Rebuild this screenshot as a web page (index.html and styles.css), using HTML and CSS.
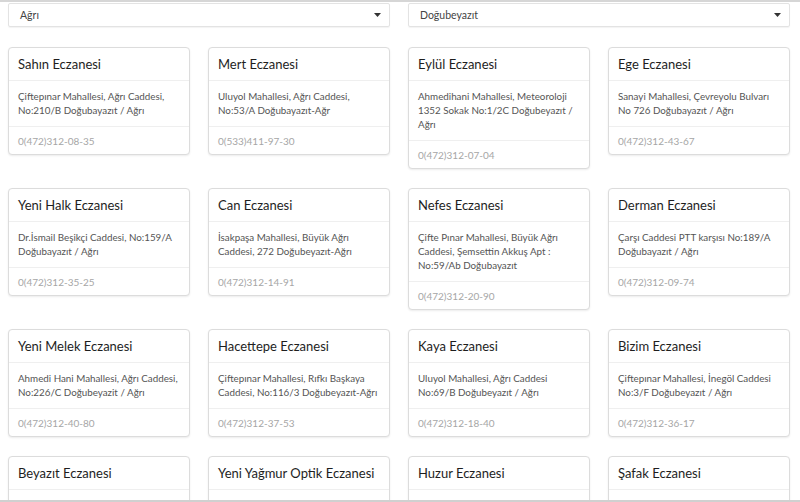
FILE: index.html
```html
<!DOCTYPE html>
<html lang="tr">
<head>
<meta charset="utf-8">
<title>Nöbetçi Eczaneler</title>
<link rel="stylesheet" href="styles.css">
</head>
<body>
<div class="topline"></div>
<div class="filters">
  <div class="select"><span>Ağrı</span><svg class="caret" width="7" height="4" viewBox="0 0 7 4"><path d="M0 0h7L3.5 4z" fill="#333"/></svg></div>
  <div class="select"><span>Doğubeyazıt</span><svg class="caret" width="7" height="4" viewBox="0 0 7 4"><path d="M0 0h7L3.5 4z" fill="#333"/></svg></div>
</div>
<div class="grid">
  <div class="card"><div class="card-title">Sahın Eczanesi</div><div class="card-body">Çiftepınar Mahallesi, Ağrı Caddesi, No:210/B Doğubayazıt / Ağrı</div><div class="card-foot">0(472)312-08-35</div></div>
  <div class="card"><div class="card-title">Mert Eczanesi</div><div class="card-body">Uluyol Mahallesi, Ağrı Caddesi, No:53/A Doğubayazıt-Ağr</div><div class="card-foot">0(533)411-97-30</div></div>
  <div class="card"><div class="card-title">Eylül Eczanesi</div><div class="card-body">Ahmedihani Mahallesi, Meteoroloji 1352 Sokak No:1/2C Doğubeyazıt / Ağrı</div><div class="card-foot">0(472)312-07-04</div></div>
  <div class="card"><div class="card-title">Ege Eczanesi</div><div class="card-body">Sanayi Mahallesi, Çevreyolu Bulvarı No 726 Doğubayazıt / Ağrı</div><div class="card-foot">0(472)312-43-67</div></div>

  <div class="card"><div class="card-title">Yeni Halk Eczanesi</div><div class="card-body">Dr.İsmail Beşikçi Caddesi, No:159/A Doğubayazıt / Ağrı</div><div class="card-foot">0(472)312-35-25</div></div>
  <div class="card"><div class="card-title">Can Eczanesi</div><div class="card-body">İsakpaşa Mahallesi, Büyük Ağrı Caddesi, 272 Doğubeyazıt-Ağrı</div><div class="card-foot">0(472)312-14-91</div></div>
  <div class="card"><div class="card-title">Nefes Eczanesi</div><div class="card-body">Çifte Pınar Mahallesi, Büyük Ağrı Caddesi, Şemsettin Akkuş Apt : No:59/Ab Doğubayazıt</div><div class="card-foot">0(472)312-20-90</div></div>
  <div class="card"><div class="card-title">Derman Eczanesi</div><div class="card-body">Çarşı Caddesi PTT karşısı No:189/A Doğubayazıt / Ağrı</div><div class="card-foot">0(472)312-09-74</div></div>

  <div class="card"><div class="card-title">Yeni Melek Eczanesi</div><div class="card-body">Ahmedi Hani Mahallesi, Ağrı Caddesi, No:226/C Doğubeyazit / Ağrı</div><div class="card-foot">0(472)312-40-80</div></div>
  <div class="card"><div class="card-title">Hacettepe Eczanesi</div><div class="card-body">Çiftepınar Mahallesi, Rıfkı Başkaya Caddesi, No:116/3 Doğubeyazıt-Ağrı</div><div class="card-foot">0(472)312-37-53</div></div>
  <div class="card"><div class="card-title">Kaya Eczanesi</div><div class="card-body">Uluyol Mahallesi, Ağrı Caddesi No:69/B Doğubeyazıt / Ağrı</div><div class="card-foot">0(472)312-18-40</div></div>
  <div class="card"><div class="card-title">Bizim Eczanesi</div><div class="card-body">Çiftepınar Mahallesi, İnegöl Caddesi No:3/F Doğubeyazıt / Ağrı</div><div class="card-foot">0(472)312-36-17</div></div>

  <div class="card"><div class="card-title">Beyazıt Eczanesi</div><div class="card-body">İshakpaşa Mahallesi, Ağrı Caddesi, No:12 Doğubayazıt / Ağrı</div><div class="card-foot">0(472)312-11-22</div></div>
  <div class="card"><div class="card-title">Yeni Yağmur Optik Eczanesi</div><div class="card-body">Dr.İsmail Beşikçi Caddesi No:107 Doğubayazıt / Ağrı</div><div class="card-foot">0(472)312-55-10</div></div>
  <div class="card"><div class="card-title">Huzur Eczanesi</div><div class="card-body">Uluyol Mahallesi, Ağrı Caddesi, Doğubayazıt / Ağrı</div><div class="card-foot">0(472)312-60-44</div></div>
  <div class="card"><div class="card-title">Şafak Eczanesi</div><div class="card-body">Uluyol Mahallesi, Ağrı Caddesi, No:15 Doğubayazıt / Ağrı</div><div class="card-foot">0(472)312-71-30</div></div>
</div>
<div class="bottomline"></div>
</body>
</html>
```
FILE: styles.css
```css
html, body {
  margin: 0;
  padding: 0;
  overflow: hidden;
  background: #fff;
}
body {
  font-family: Lato, "Open Sans", Arial, sans-serif;
  color: #333;
}
.topline {
  height: 2px;
  background: #d6d6d6;
}
.filters {
  display: grid;
  grid-template-columns: 382px 382px;
  column-gap: 18px;
  padding: 1px 0 0 8px;
}
.select {
  height: 24px;
  box-sizing: border-box;
  border: 1px solid #e3e3e3;
  border-radius: 2px;
  box-shadow: 0 1px 1px rgba(0,0,0,0.05);
  display: flex;
  align-items: center;
  justify-content: space-between;
  padding: 0 8px 0 11px;
  font-size: 10.5px;
  color: #444;
}
.caret {
  display: block;
}
.grid {
  display: grid;
  grid-template-columns: repeat(4, 182px);
  column-gap: 18px;
  row-gap: 19px;
  align-items: start;
  padding: 20px 0 0 8px;
}
.card {
  border: 1px solid #dcdcdc;
  border-radius: 4px;
  box-shadow: 0 1px 2px rgba(0,0,0,0.08);
  background: #fff;
}
.card-title {
  padding: 8px 9px 8px;
  font-size: 13px;
  line-height: 16px;
  color: #1e1e1e;
  border-bottom: 1px solid #efefef;
}
.card-body {
  padding: 8px 5px 9px 9px;
  font-size: 9.8px;
  line-height: 14px;
  color: #555;
  border-bottom: 1px solid #efefef;
}
.card-foot {
  padding: 7px 9px 6px;
  font-size: 10px;
  line-height: 14px;
  color: #a6a6a6;
}
.bottomline {
  position: fixed;
  left: 0;
  right: 0;
  bottom: 0;
  height: 2px;
  background: #d0d0d0;
}
```
